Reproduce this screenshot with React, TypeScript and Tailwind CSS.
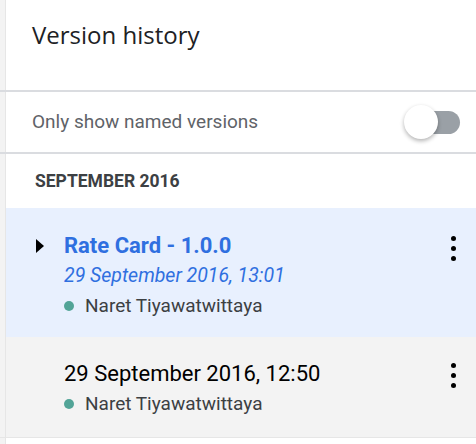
import React from "react";

function Kebab() {
  return (
    <div className="flex flex-col items-center gap-[5px] w-[6px]">
      <span className="block w-[5px] h-[5px] rounded-full bg-black" />
      <span className="block w-[5px] h-[5px] rounded-full bg-black" />
      <span className="block w-[5px] h-[5px] rounded-full bg-black" />
    </div>
  );
}

function Strip() {
  return <div className="w-[6px] shrink-0 border-r bg-[#f3f3f3] border-[#e6e6e6]" />;
}

export default function App() {
  return (
    <div
      className="w-[476px] h-[444px] bg-white overflow-hidden flex flex-col"
      style={{ fontFamily: "Roboto, 'Liberation Sans', sans-serif" }}
    >
      {/* Header */}
      <div className="flex h-[92px] border-b-2 border-[#dadce0]">
        <Strip />
        <div className="flex-1 pl-[26px] pt-[19px]">
          <h1
            className="text-[24px] leading-[32px] text-[#202124]"
            style={{ fontFamily: "'Open Sans', Roboto, sans-serif" }}
          >
            Version history
          </h1>
        </div>
      </div>

      {/* Toggle row */}
      <div className="flex h-[62px] border-b-2 border-[#dadce0]">
        <Strip />
        <div className="flex-1 flex items-center justify-between pl-[26px] pr-[16px]">
          <span className="text-[19px] text-[#5f6368]">Only show named versions</span>
          <div className="relative w-[56px] h-[36px] flex items-center">
            <div className="absolute right-0 w-[40px] h-[23px] rounded-full bg-[#9aa0a6]" />
            <div className="absolute left-0 w-[34px] h-[34px] rounded-full bg-white shadow-[0_2px_4px_rgba(0,0,0,0.3)]" />
          </div>
        </div>
      </div>

      {/* Month */}
      <div className="flex h-[54px]">
        <Strip />
        <div className="flex-1 flex items-center pl-[29px]">
          <span className="text-[17.5px] font-bold text-[#3c4043]">SEPTEMBER 2016</span>
        </div>
      </div>

      {/* Selected version */}
      <div className="flex h-[129px] bg-[#e8f0fe]">
        <Strip />
        <div className="flex-1 flex pt-[23px] pr-[20px]">
          <div className="w-[58px] flex justify-end pr-[20px] pt-[8px]">
            <svg width="8" height="14" viewBox="0 0 8 14">
              <path d="M0 0 L8 7 L0 14 Z" fill="#000" />
            </svg>
          </div>
          <div className="flex-1 flex flex-col">
            <span className="text-[22px] leading-[30px] font-bold text-[#2f6fe0]">Rate Card - 1.0.0</span>
            <span className="text-[19.5px] leading-[30px] italic text-[#2f6fe0]">29 September 2016, 13:01</span>
            <div className="flex items-center gap-[11px] h-[30px]">
              <span className="block w-[10px] h-[10px] rounded-full bg-[#52a497]" />
              <span className="text-[19px] text-[#3c4043]">Naret Tiyawatwittaya</span>
            </div>
          </div>
          <div className="pt-[5px]">
            <Kebab />
          </div>
        </div>
      </div>

      {/* Other version */}
      <div className="flex h-[101px] bg-[#f3f3f3] border-b border-[#e6e6e6]">
        <Strip />
        <div className="flex-1 flex pt-[22px] pr-[20px] pl-[58px]">
          <div className="flex-1 flex flex-col">
            <span className="text-[22px] leading-[30px] text-[#000]">29 September 2016, 12:50</span>
            <div className="flex items-center gap-[11px] h-[30px]">
              <span className="block w-[10px] h-[10px] rounded-full bg-[#52a497]" />
              <span className="text-[19px] text-[#3c4043]">Naret Tiyawatwittaya</span>
            </div>
          </div>
          <div className="pt-[4px]">
            <Kebab />
          </div>
        </div>
      </div>

      <div className="flex flex-1">
        <Strip />
        <div className="flex-1" />
      </div>
    </div>
  );
}
